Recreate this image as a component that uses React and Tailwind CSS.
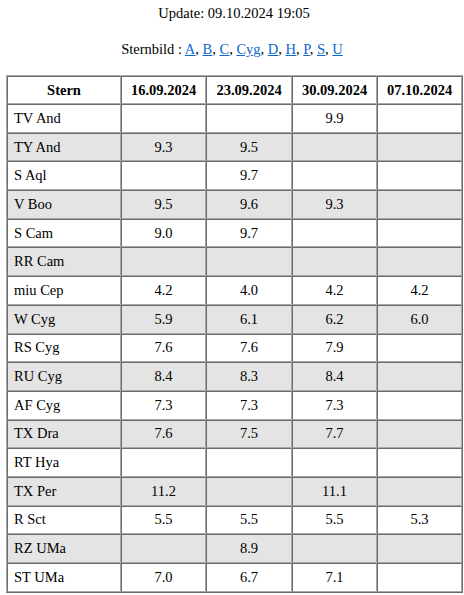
import React from "react";

const dates = ["16.09.2024", "23.09.2024", "30.09.2024", "07.10.2024"];

const rows = [
  ["TV And", "", "", "9.9", ""],
  ["TY And", "9.3", "9.5", "", ""],
  ["S Aql", "", "9.7", "", ""],
  ["V Boo", "9.5", "9.6", "9.3", ""],
  ["S Cam", "9.0", "9.7", "", ""],
  ["RR Cam", "", "", "", ""],
  ["miu Cep", "4.2", "4.0", "4.2", "4.2"],
  ["W Cyg", "5.9", "6.1", "6.2", "6.0"],
  ["RS Cyg", "7.6", "7.6", "7.9", ""],
  ["RU Cyg", "8.4", "8.3", "8.4", ""],
  ["AF Cyg", "7.3", "7.3", "7.3", ""],
  ["TX Dra", "7.6", "7.5", "7.7", ""],
  ["RT Hya", "", "", "", ""],
  ["TX Per", "11.2", "", "11.1", ""],
  ["R Sct", "5.5", "5.5", "5.5", "5.3"],
  ["RZ UMa", "", "8.9", "", ""],
  ["ST UMa", "7.0", "6.7", "7.1", ""],
];

const links = ["A", "B", "C", "Cyg", "D", "H", "P", "S", "U"];

const cell =
  "border-t border-l border-t-[#6b6b6b] border-l-[#6b6b6b] border-b border-r border-b-[#a8a8a8] border-r-[#a8a8a8]";

export default function App() {
  return (
    <div className="min-h-[595px] bg-white text-black font-['Liberation_Serif',serif] text-[14.5px] leading-[17px] pt-[5px]">
      {/* kopf */}
      <p className="text-center pl-[4px]">Update: 09.10.2024 19:05</p>
      <p className="mt-[19px] text-center">
        Sternbild :{" "}
        {links.map((l, i) => (
          <span key={l}>
            <a href={"#" + l} className="text-[#0b66d0] underline">
              {l}
            </a>
            {i < links.length - 1 ? ", " : ""}
          </span>
        ))}
      </p>

      {/* tabelle */}
      <table className="mt-[17px] ml-[6px] w-[457px] table-fixed border-separate border-spacing-0 border-t border-l border-t-[#a8a8a8] border-l-[#a8a8a8] border-b border-r border-b-[#6b6b6b] border-r-[#6b6b6b]">
        <colgroup>
          <col className="w-[114px]" />
          <col className="w-[85px]" />
          <col className="w-[86px]" />
          <col className="w-[85px]" />
          <col />
        </colgroup>
        <thead>
          <tr className="h-[28px]">
            <th className={cell + " font-bold text-center"}>Stern</th>
            {dates.map((d) => (
              <th key={d} className={cell + " font-bold text-center"}>
                {d}
              </th>
            ))}
          </tr>
        </thead>
        <tbody>
          {rows.map((r, i) => (
            <tr key={r[0]} className={"h-[28.7px] " + (i % 2 ? "bg-[#e4e4e4]" : "bg-white")}>
              <td className={cell + " pl-[6px] text-left"}>{r[0]}</td>
              {r.slice(1).map((v, j) => (
                <td key={j} className={cell + " text-center"}>
                  {v}
                </td>
              ))}
            </tr>
          ))}
        </tbody>
      </table>
    </div>
  );
}
